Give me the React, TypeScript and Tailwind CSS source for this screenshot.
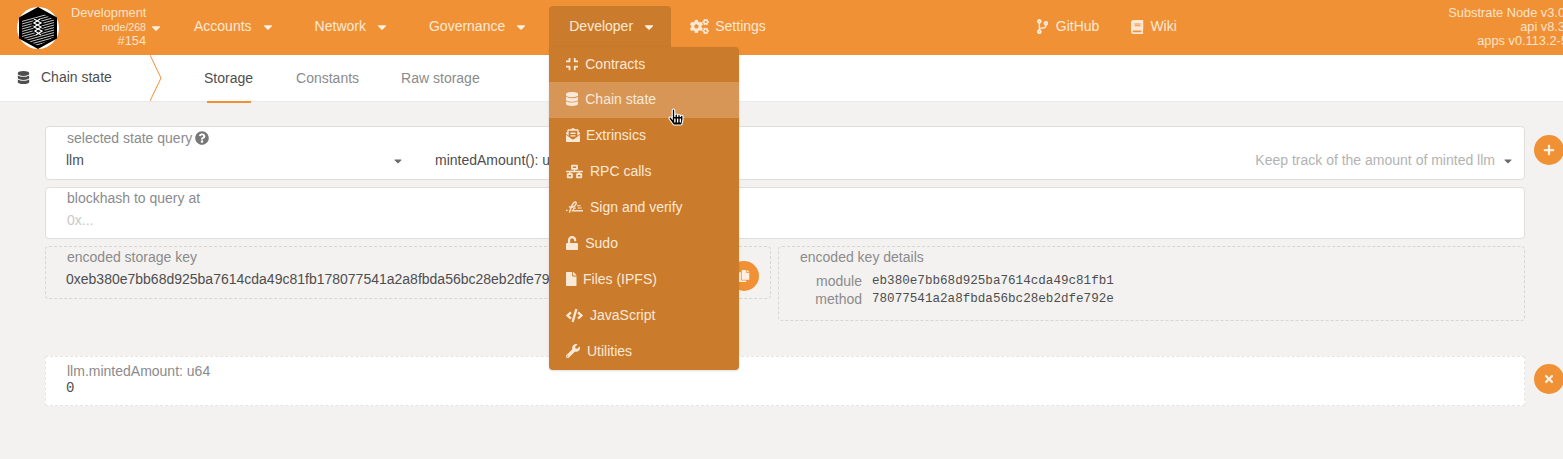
import type { ReactNode } from 'react'
import {
  FaBook,
  FaCaretDown,
  FaCode,
  FaCodeBranch,
  FaCogs,
  FaCompress,
  FaCopy,
  FaDatabase,
  FaEnvelopeOpenText,
  FaFile,
  FaHandPointer,
  FaNetworkWired,
  FaPlus,
  FaQuestionCircle,
  FaTimes,
  FaUnlock,
  FaWrench,
} from 'react-icons/fa'

function SignatureIcon() {
  return (
    <svg width="17" height="13" viewBox="0 0 17 13" fill="none" stroke="currentColor" aria-hidden="true">
      <circle cx="0.8" cy="9.4" r="0.8" fill="currentColor" stroke="none" />
      <path d="M3.4 11.6 C4.4 8 6 3 8.6 1.2 C10.6 0 11 3 8.6 5 C7 6.3 5 7.4 3 5.6" strokeWidth="1.4" />
      <path d="M7.2 9 C7.4 7 9 6.4 9.6 7.6" strokeWidth="1.2" />
      <path d="M11 4.8 H14.6 M11.8 7 H15.6" strokeWidth="1.1" />
      <path d="M5.6 9.8 H17" strokeWidth="1.4" />
    </svg>
  )
}

const menuItems = [
  { label: 'Contracts', icon: <FaCompress size={14} className="w-[12.25px]" />, gap: 'gap-[7px]', row: 'h-[35px] pb-[1px]' },
  { label: 'Chain state', icon: <FaDatabase size={14} className="w-[12.25px]" />, gap: 'gap-[7px]', row: 'h-[36px] pb-[2px]', active: true },
  { label: 'Extrinsics', icon: <FaEnvelopeOpenText size={14} />, gap: 'gap-[6px]', row: 'h-[36px] pb-[2px]' },
  { label: 'RPC calls', icon: <FaNetworkWired size={17} />, gap: 'gap-[7px]', row: 'h-[36px] pb-[2px]' },
  { label: 'Sign and verify', icon: <SignatureIcon />, gap: 'gap-[7px]', row: 'h-[36px] pb-[2px]' },
  { label: 'Sudo', icon: <FaUnlock size={14} className="w-[12.25px]" />, gap: 'gap-[7px]', row: 'h-[36px] pb-[2px]' },
  { label: 'Files (IPFS)', icon: <FaFile size={14} className="w-[10.5px]" />, gap: 'gap-[6.5px]', row: 'h-[36px] pb-[2px]' },
  { label: 'JavaScript', icon: <FaCode size={17} />, gap: 'gap-[7px]', row: 'h-[36px] pb-[2px]' },
  { label: 'Utilities', icon: <FaWrench size={14} />, gap: 'gap-[7px]', row: 'h-[36px] pb-[2px]' },
]

function Logo() {
  const lines = [-16, -13.5, -11, -8.5, -6, -3.5, -1, 1.5, 4, 6.5, 9, 11.5, 14, 16.5, 19, 21.5]
  return (
    <svg width="42" height="42" viewBox="-21 -21 42 42" aria-hidden="true">
      <defs>
        <clipPath id="logo-hatch">
          <polygon points="-16,-8 6,-14 16,-8 16,9 0,18 -16,9" />
        </clipPath>
      </defs>
      <circle r="21" fill="#fff" />
      <polygon points="0,-21 19,-10.5 19,10.5 0,21 -19,10.5 -19,-10.5" fill="#000" />
      <g clipPath="url(#logo-hatch)">
        {lines.map((y) => (
          <line key={y} x1={-18} y1={y} x2={18} y2={y - 10} stroke="#fff" strokeWidth="0.9" opacity={0.85} />
        ))}
      </g>
      <path d="M-4 -9 L3 -5 L-4 -1 L4 3 L-2 7 M2 -9 L-4 -5 L3 -1 L-3 3 L3 7" fill="none" stroke="#000" strokeWidth="3.2" />
      <path d="M-4 -9 L3 -5 L-4 -1 L4 3 L-2 7 M2 -9 L-4 -5 L3 -1 L-3 3 L3 7" fill="none" stroke="#fff" strokeWidth="1.3" />
    </svg>
  )
}

function NavItem({ label, icon, caret, gap = 'gap-[6px]' }: { label: string; icon?: ReactNode; caret?: boolean; gap?: string }) {
  return (
    <div className={`flex items-center pb-[2px] text-[14px] text-[#fbe9d7] whitespace-nowrap ${gap}`}>
      {icon}
      <span>{label}</span>
      {caret && <FaCaretDown size={14} className="ml-[3px] text-[#fdf0e3]" />}
    </div>
  )
}

function Field({
  label,
  dashed,
  labelPad = 'pt-[2px]',
  className = '',
  children,
}: {
  label: ReactNode
  dashed?: boolean
  labelPad?: string
  className?: string
  children: ReactNode
}) {
  return (
    <div
      className={`shrink-0 rounded-[4px] pl-[21px] pr-[30px] ${
        dashed ? 'border border-dashed border-[#d7d6d5]' : 'border border-[#dfdedd] bg-white'
      } ${className}`}
    >
      <div className={`text-[14px] leading-[16px] text-[#8b8b8b] ${labelPad}`}>{label}</div>
      {children}
    </div>
  )
}

function RoundButton({ children, className = '' }: { children: ReactNode; className?: string }) {
  return (
    <div className={`flex h-[30px] w-[30px] shrink-0 items-center justify-center rounded-full bg-[#f19135] text-[#fdf0e3] ${className}`}>
      {children}
    </div>
  )
}

export default function App() {
  return (
    <div className="relative h-[459px] w-[1563px] overflow-hidden bg-[#f3f2f1] font-['Liberation_Sans',sans-serif] text-[14px] text-[#4e4e4e]">
      <header className="flex h-[55px] items-center bg-[#f19135] pl-[17px]">
        <Logo />
        <div className="ml-[12px] w-[75px] pb-[2px] text-right text-[12.8px] leading-[14px] text-[#fbe3cc]">
          <div className="whitespace-nowrap text-left">Development</div>
          <div className="text-[10.6px]">node/268</div>
          <div>#154</div>
        </div>
        <FaCaretDown size={14} className="ml-[3px] text-[#fdf0e3]" />
        <div className="ml-[31px] flex items-center gap-[40px]">
          <NavItem label="Accounts" caret />
          <NavItem label="Network" caret />
          <NavItem label="Governance" caret />
        </div>
        <div className="ml-[21px] flex h-[49px] w-[122px] self-end rounded-t-[4px] bg-[#cb7b2c] pb-[6px] pl-[20px]">
          <NavItem label="Developer" caret />
        </div>
        <div className="ml-[19px]">
          <NavItem label="Settings" icon={<FaCogs size={19} />} />
        </div>
        <div className="ml-[271px] flex items-center gap-[32px]">
          <NavItem label="GitHub" gap="gap-[7.75px]" icon={<FaCodeBranch size={15} className="w-[11.25px]" />} />
          <NavItem label="Wiki" gap="gap-[6.75px]" icon={<FaBook size={14} className="w-[12.25px]" />} />
        </div>
        <div className="ml-auto -mr-[2px] pb-[2px] text-right text-[12.8px] leading-[14px] text-[#fbe3cc] whitespace-nowrap">
          <div>Substrate Node v3.0</div>
          <div>api v8.3</div>
          <div className="-mr-[3px]">apps v0.113.2-5</div>
        </div>
      </header>

      <nav className="flex h-[47px] items-stretch border-b border-[#eaeaea] bg-white">
        <div className="flex w-[150px] items-center gap-[11px] pb-[2px] pl-[17px] text-[#4e4e4e]">
          <FaDatabase size={13} />
          <span>Chain state</span>
        </div>
        <svg width="12" height="46" viewBox="0 0 12 46" className="shrink-0" aria-hidden="true">
          <path d="M0 0 L11 23 L0 46" fill="none" stroke="#f19135" strokeWidth="1" />
        </svg>
        <div className="ml-[42px] flex items-center gap-[43px] text-[#8b8b8b]">
          <div className="relative flex h-full items-center text-[#4e4e4e]">
            Storage
            <div className="absolute bottom-[-2px] left-[3px] h-[2px] w-[44px] bg-[#f19135]" />
          </div>
          <div>Constants</div>
          <div className="-ml-[1px]">Raw storage</div>
        </div>
      </nav>

      <main className="flex flex-col pl-[45px] pt-[24px]">
        <div className="flex items-start">
          <Field
            className="h-[54px] w-[1480px]"
            labelPad="pt-[3px]"
            label={
              <span className="flex items-center gap-[3px]">
                selected state query
                <FaQuestionCircle size={14} className="text-[#777]" />
              </span>
            }
          >
            <div className="mt-[4px] flex items-center text-[#4e4e4e]">
              <span className="-ml-[1px] w-[326px]">llm</span>
              <FaCaretDown size={12} className="text-[#6b6b6b]" />
              <span className="ml-[31px]">mintedAmount(): u64</span>
              <span className="ml-auto text-[#b3b3b3]">Keep track of the amount of minted llm</span>
              <FaCaretDown size={12} className="ml-[7px] -mr-[20px] text-[#6b6b6b]" />
            </div>
          </Field>
          <RoundButton className="ml-[9px] mt-[9px]"><FaPlus size={12} /></RoundButton>
        </div>

        <Field className="mt-[7px] h-[52px] w-[1480px]" label="blockhash to query at">
          <div className="mt-[4px] text-[#c9c9c9]">0x...</div>
        </Field>

        <div className="mt-[7px] flex w-[1480px] items-start gap-[7px]">
          <Field dashed className="relative h-[53px] w-[726px]" label="encoded storage key">
            <div className="mt-[4px] -ml-[1px] whitespace-nowrap text-[#4e4e4e]">
              0xeb380e7bb68d925ba7614cda49c81fb178077541a2a8fbda56bc28eb2dfe792e
            </div>
            <RoundButton className="absolute right-[11px] top-[14px]"><FaCopy size={12} /></RoundButton>
          </Field>
          <Field dashed className="h-[75px] w-[747px]" label="encoded key details">
            <div className="mt-[7px] grid grid-cols-[62px_1fr] gap-x-[10px] text-[#8b8b8b]">
              <div className="text-right leading-[18px]">module</div>
              <div className="font-['Liberation_Mono',monospace] text-[12.6px] leading-[18px] text-[#4e4e4e]">eb380e7bb68d925ba7614cda49c81fb1</div>
              <div className="text-right leading-[18px]">method</div>
              <div className="font-['Liberation_Mono',monospace] text-[12.6px] leading-[18px] text-[#4e4e4e]">78077541a2a8fbda56bc28eb2dfe792e</div>
            </div>
          </Field>
        </div>

        <div className="mt-[35px] flex items-start">
          <div className="h-[50px] w-[1480px] shrink-0 border border-dashed border-[#e6e5e4] bg-white pl-[21px] pt-[6px]">
            <div className="text-[14px] leading-[16px] text-[#8b8b8b]">llm.mintedAmount: u64</div>
            <div className="-ml-[1px] mt-[1px] font-['Liberation_Mono',monospace] text-[14px] leading-[16px] text-[#4e4e4e]">0</div>
          </div>
          <RoundButton className="ml-[9px] mt-[8px]"><FaTimes size={12} /></RoundButton>
        </div>
      </main>

      <div className="absolute left-[549px] top-[47px] w-[190px] rounded-b-[4px] rounded-tr-[4px] bg-[#cb7b2c] shadow-sm">
        {menuItems.map((item) => (
          <div
            key={item.label}
            className={`flex items-center pl-[17px] text-[14px] text-[#fbe9d7] ${item.row} ${item.gap} ${item.active ? 'bg-[#d79556]' : ''}`}
          >
            {item.icon}
            <span>{item.label}</span>
          </div>
        ))}
      </div>
      <FaHandPointer
        size={16}
        stroke="#fff"
        strokeWidth={36}
        className="absolute left-[668px] top-[109px] overflow-visible text-black"
      />
    </div>
  )
}
